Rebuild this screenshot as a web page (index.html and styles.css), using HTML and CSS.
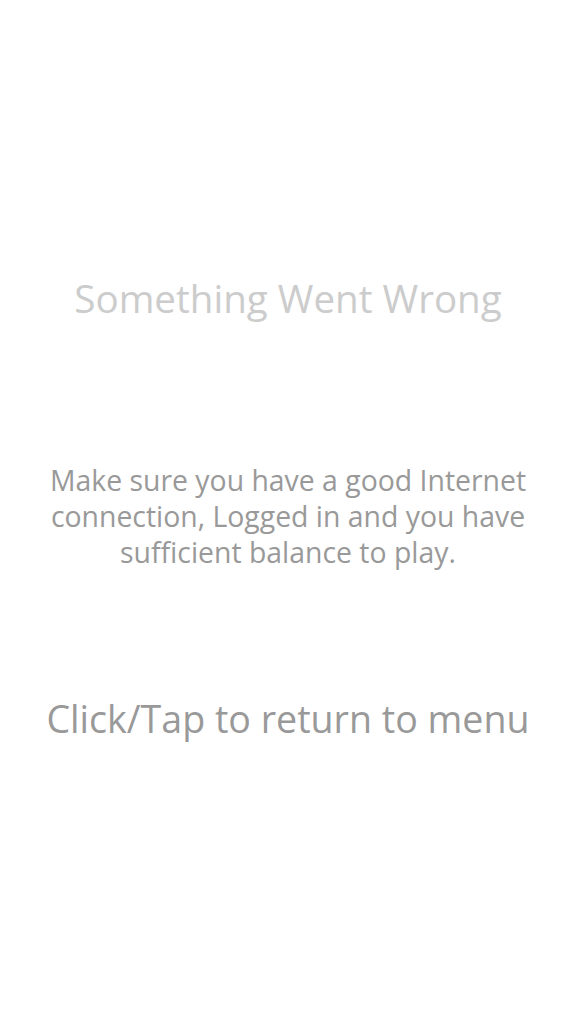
FILE: index.html
```html
<!DOCTYPE html>
<html>
<head>
<meta charset="utf-8">
<link rel="stylesheet" href="styles.css">
</head>
<body>
<main class="screen">
  <h1 class="title">Something Went Wrong</h1>
  <p class="message">Make sure you have a good Internet connection, Logged in and you have sufficient balance to play.</p>
  <p class="action">Click/Tap to return to menu</p>
</main>
</body>
</html>
```
FILE: styles.css
```css
html, body {
  margin: 0;
  padding: 0;
  background: #fff;
}
.screen {
  width: 576px;
  height: 1024px;
  display: flex;
  flex-direction: column;
  align-items: center;
  font-family: "Open Sans", "Noto Sans", sans-serif;
  text-align: center;
}
.title {
  margin: 274px 0 0;
  font-size: 38.6px;
  line-height: 48px;
  font-weight: 400;
  color: #cccccc;
}
.message {
  margin: 140px 0 0;
  width: 500px;
  font-size: 28.4px;
  line-height: 36px;
  color: #999999;
}
.action {
  margin: 125px 0 0;
  font-size: 37.6px;
  line-height: 48px;
  color: #999999;
}
```
